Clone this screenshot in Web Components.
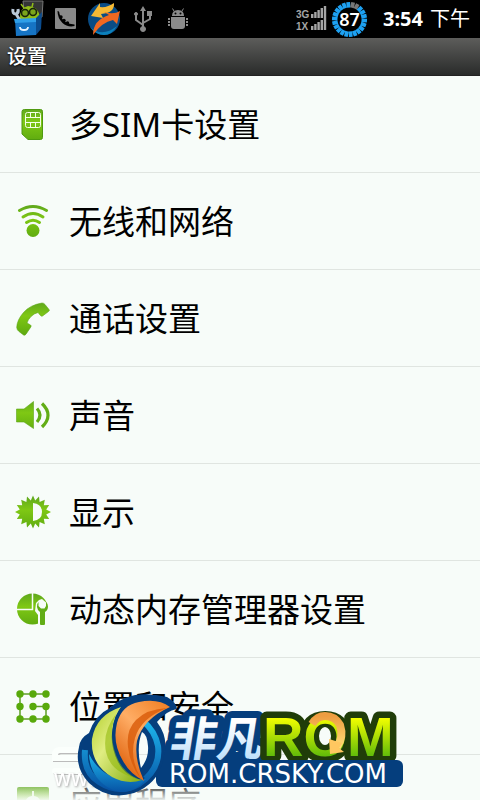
<!DOCTYPE html>
<html lang="zh-CN">
<head>
<meta charset="utf-8">
<meta name="viewport" content="width=device-width, initial-scale=1">
<title>设置</title>
<style>
  body {
    margin: 0;
    background: #f7fcf9;
    font-family: "Noto Sans", "Noto Sans CJK SC", sans-serif;
  }
</style>
</head>
<body>
<settings-screen>
  <status-bar slot="top" time="3:54" period="下午" battery="87"></status-bar>
  <title-bar slot="top">设置</title-bar>
  <setting-row icon="sim">多SIM卡设置</setting-row>
  <setting-row icon="wifi">无线和网络</setting-row>
  <setting-row icon="phone">通话设置</setting-row>
  <setting-row icon="sound">声音</setting-row>
  <setting-row icon="display">显示</setting-row>
  <setting-row icon="memory">动态内存管理器设置</setting-row>
  <setting-row icon="lock">位置和安全</setting-row>
  <setting-row icon="apps">应用程序</setting-row>
  <rom-logo slot="over"></rom-logo>
</settings-screen>

<script>
// all row icons are drawn on a 36x36 box
const icons = {
  sim: `<path fill="url(#g)" stroke="#4f9a10" d="M9.500 2.500h16q2 0 2 2v26q0 2-2 2H13l-6-5.500v-22.500q0-2 2.500-2z"/>
    <g fill="none" stroke="#f4ffe6"><rect x="10.500" y="5.500" width="15" height="15" rx="2"/><path d="M10.500 10.500h15M10.500 15.500h15M15.500 5.500v5M20.500 5.500v5M15.500 15.500v5M20.500 15.500v5"/></g>`,
  wifi: `<g fill="none" stroke="url(#g)" stroke-width="3" stroke-linecap="round"><path d="M4.500 6.500Q18 -1.500 31.500 6.500"/><path d="M8 13Q18 6 28 13"/><path d="M11.500 18.500Q18 14 24.500 18.500"/></g>
    <circle cx="18" cy="26.500" r="6.500" fill="url(#g)"/>`,
  phone: `<path fill="url(#g)" stroke="#5da618" stroke-width=".6" d="M27 2q2 0 3 1.500l4 5q1 1-.5 2l-6 4.500q-1 .5-2-.5l-2.500-3q-4 1-7 4t-4 6.500l3.500 2q1 .7.500 1.700l-5 7.500q-1 1.500-2.500.7L4 30.500q-2-1.500-2.300-4Q2 19 8.500 11.500T27 2z"/>`,
  sound: `<path fill="url(#g)" stroke="#5da618" stroke-width=".6" d="M1.500 11H9l9.500-7.500v27L9 24H1.500z"/>
    <g fill="none" stroke="#62ad16" stroke-width="3.200"><path d="M22 10.500q6 6.500 0 13.500"/><path d="M27 5.500q12 11.500 0 23.500"/></g>`,
  display: `<path fill="url(#g)" d="M18 .5l2.200 5 3.800-4 .6 5.400 5.200-2.200-1 5.500 5.400-.2-3 4.500 4.800 2.500-4.800 2.500 3 4.500-5.400-.2 1 5.500-5.200-2.200-.6 5.400-3.800-4-2.200 5-2.200-5-3.800 4-.6-5.400-5.200 2.200 1-5.500-5.400.2 3-4.500L0 17l4.800-2.500-3-4.500 5.400.2-1-5.500 5.200 2.200.6-5.400 3.800 4z"/>
    <path fill="#f7fcf9" d="M18 8q9 1 9 9T18 26z"/>`,
  memory: `<circle cx="17.500" cy="17" r="15.500" fill="url(#g)"/><path fill="none" stroke="#f7fcf9" stroke-width="1.500" d="M17.500 1v16.500H1"/>
    <path fill="#f7fcf9" d="M24 8l3-1 8 7v5l-3 4v12h-9V23l-3-4 1-8z"/>
    <path fill="#62ad16" d="M23.500 10q-2 2-1.500 5 .5 3.500 3 5v12q0 1 1 1h3q1 0 1-1V20q3-2 3-5.500 0-3-2-4.500v4l-1.500 2.500H26L23.500 14z"/>`,
  lock: `<path fill="none" stroke="#5f9d27" stroke-width="1.500" d="M18 17.500h13V30H5V5h26"/>
    <g fill="#58a90b"><circle cx="5" cy="5" r="3.700"/><circle cx="18" cy="5" r="3.700"/><circle cx="31" cy="5" r="3.700"/><circle cx="5" cy="17.500" r="3.700"/><circle cx="18" cy="17.500" r="3.700"/><circle cx="31" cy="17.500" r="3.700"/><circle cx="5" cy="30" r="3.700"/><circle cx="18" cy="30" r="3.700"/><circle cx="31" cy="30" r="3.700"/></g>`,
  apps: `<rect x="2" y="1" width="32" height="34" rx="2" fill="url(#g)"/><path fill="#e7f7d8" d="M17 5h2v5q6 1 7 7H10q1-6 7-7z"/>`
};

class SettingRow extends HTMLElement {
  connectedCallback() {
    this.attachShadow({ mode: "open" }).innerHTML = `
<style>
  :host {
    display: block;
    border-bottom: 1px solid #e0e5e1;
  }
  a {
    display: flex;
    align-items: center;
    gap: 18px;
    height: 94px;
    padding: 2px 15px 0;
    color: #000;
    font-size: 33px;
    line-height: 48px;
    text-decoration: none;
    white-space: nowrap;
  }
  svg {
    flex: none;
    width: 36px;
    height: 36px;
  }
</style>
<a href="#${this.getAttribute("icon")}">
  <svg viewBox="0 0 36 36" aria-hidden="true">
    <defs><linearGradient id="g" gradientUnits="userSpaceOnUse" x1="0" y1="2" x2="0" y2="34"><stop offset="0" stop-color="#60a91c"/><stop offset=".4" stop-color="#7fc814"/><stop offset="1" stop-color="#5eaa10"/></linearGradient></defs>
    ${icons[this.getAttribute("icon")]}
  </svg>
  <span><slot></slot></span>
</a>`;
  }
}

class TitleBar extends HTMLElement {
  connectedCallback() {
    this.attachShadow({ mode: "open" }).innerHTML = `
<style>
  :host {
    display: block;
    background: linear-gradient(#5d5d5b, #292b2a);
    border-bottom: 1px solid #222;
  }
  h1 {
    margin: 0;
    padding: 0 7px;
    color: #fff;
    font-size: 20px;
    font-weight: 500;
    line-height: 37px;
    text-shadow: 0 1px 2px #000;
  }
</style>
<h1><slot></slot></h1>`;
  }
}

class StatusBar extends HTMLElement {
  connectedCallback() {
    // battery ring: 22 ticks, the used ones are grey
    let ticks = "";
    for (let i = 0; i < 22; i++) {
      const color = i === 1 || i === 2 ? "#777" : "#1da1f2";
      ticks += `<rect x="16.500" y="1" width="3.800" height="5.500" fill="${color}" transform="rotate(${i * 360 / 22 - 4} 18.500 18.500)"/>`;
    }
    const bars = y => [0, 1, 2, 3, 4].map(i =>
      `<rect x="${15 + i * 3.2}" y="${y - 4 - i * 2}" width="2.400" height="${4 + i * 2}"/>`).join("");

    this.attachShadow({ mode: "open" }).innerHTML = `
<style>
  :host {
    display: flex;
    align-items: center;
    justify-content: space-between;
    height: 38px;
    padding: 0 10px;
    background: #000;
    color: #fff;
  }
  div {
    display: flex;
    align-items: center;
  }
  svg {
    display: block;
    flex: none;
  }
  .notes {
    gap: 10px;
  }
  .battery {
    display: grid;
    place-items: center;
    margin: 0 15px 0 4px;
    font-size: 18px;
    font-weight: 600;
    line-height: 24px;
  }
  .battery > * {
    grid-area: 1 / 1;
  }
  .clock {
    gap: 7px;
    font-size: 20px;
    line-height: 24px;
    white-space: nowrap;
  }
  text {
    font: bold 10px "Liberation Sans", sans-serif;
  }
</style>
<div class="notes">
  <svg width="34" height="38" viewBox="0 0 34 38">
    <path fill="#343536" stroke="#777" d="M13 1h20l-1 16-17 3z"/>
    <path fill="#90bd19" d="M10 19q-1-11 8-13 9 0 12 10l-3 5H11z"/>
    <path stroke="#90bd19" stroke-width="1.500" d="M14 8l-3-4M22 7l1-4"/>
    <g fill="#7ba51b" stroke="#17240a" stroke-width="1.600"><circle cx="15" cy="13" r="3.500"/><circle cx="23" cy="12" r="3.500"/></g>
    <path fill="none" stroke="#b9c8d7" stroke-width="3" d="M3 9q-1 5 3 5 3-1 2-5M6 14l5 8"/>
    <path fill="#1674c4" d="M5 20l21-1v16L6 36z"/><path fill="#2f9fe8" d="M4 19l22-1v4L5 23z"/><path fill="#0b4c8e" d="M26 18l6-6-1 17-5 6z"/>
    <path fill="none" stroke="#e4f3ff" stroke-width="1.800" d="M10 27q0 3 4 3 4 0 4-3"/>
  </svg>
  <svg width="23" height="22" viewBox="0 0 23 22">
    <rect x="1" y="0" width="21" height="21" rx="1" fill="#898989"/>
    <path fill="#000" d="M3.500 3q2 0 2 3 2 5 6 8 4 2 9 2.500v1.500q-7 1.500-12-3-5-5-5-12z"/>
    <g fill="#000"><circle cx="7" cy="9" r="1.700"/><circle cx="10" cy="12.500" r="1.700"/><circle cx="13.500" cy="15" r="1.700"/></g>
  </svg>
  <svg width="34" height="36" viewBox="0 0 34 36">
    <circle cx="17" cy="18" r="16" fill="#094c85"/><path fill="#0b80bb" d="M3 26q12 11 27-1-5 9-13 9T3 26z"/>
    <path fill="#f5b934" d="M4 15L13 2v4q7 1 14-4 1 10-13 11l2 4z"/>
    <path fill="#ef6821" d="M33 10l-3 13-4-4q-11 2-20 15 0-15 16-20l-5-3q10 3 16-1z"/>
  </svg>
  <svg width="26" height="28" viewBox="2 0 26 28" fill="#8b8b8b" stroke="#8b8b8b">
    <path fill="none" stroke-width="2" d="M14 5v18M14 20L7 15v-5M14 18l7-4V9"/>
    <path stroke="none" d="M14 1l3 5h-6zM18 6h5v5h-5z"/><circle cx="7" cy="9" r="1.500"/><circle cx="14" cy="24" r="2.500"/>
  </svg>
  <svg width="22" height="24" viewBox="0 0 22 24" fill="#8b8b8b">
    <path d="M5 9q0-6 6-6t6 6zM4 10h14v9q0 3-3 3H7q-3 0-3-3zM1 11h2v2H1zM1 14h2v2H1zM1 17h2v2H1zM19 11h2v2h-2zM19 14h2v2h-2zM19 17h2v2h-2z"/>
    <path fill="none" stroke="#8b8b8b" d="M7 4L5.500 1.500M15 4l1.500-2.500"/><circle cx="8.500" cy="6.500" r="1" fill="#000"/><circle cx="13.500" cy="6.500" r="1" fill="#000"/>
  </svg>
</div>
<div>
  <svg width="31" height="26" viewBox="0 0 31 26" fill="#a5a5a5">
    <text x="0" y="12">3G</text><text x="0" y="24">1X</text>
    ${bars(12)}${bars(24)}
  </svg>
  <div class="battery"><svg width="37" height="37" viewBox="0 0 37 37">${ticks}</svg><span>${this.getAttribute("battery")}</span></div>
  <div class="clock"><b>${this.getAttribute("time")}</b><span>${this.getAttribute("period")}</span></div>
</div>`;
  }
}

class RomLogo extends HTMLElement {
  connectedCallback() {
    this.attachShadow({ mode: "open" }).innerHTML = `
<style>
  :host {
    display: block;
    pointer-events: none;
  }
  svg {
    display: block;
    width: 360px;
    height: 110px;
  }
  text {
    paint-order: stroke;
    stroke-linejoin: round;
  }
  .www {
    font: 600 18px "Open Sans", sans-serif;
    fill: #fff;
    filter: drop-shadow(1px 1px 1px #aaa);
  }
  .cn {
    font: 700 47px "Noto Sans CJK SC", sans-serif;
    fill: url(#ice);
    stroke: #053e7d;
    stroke-width: 14px;
  }
  .rom {
    font: bold 56px "Liberation Sans", sans-serif;
    fill: url(#lime);
    stroke: #203d09;
    stroke-width: 13px;
  }
  .url {
    font: 26px "DejaVu Sans", sans-serif;
    fill: #fff;
  }
</style>
<svg viewBox="0 0 360 110" role="img" aria-label="非凡ROM">
  <defs>
    <linearGradient id="ice" x1="0" y1="0" x2="0" y2="1"><stop offset=".3" stop-color="#fff"/><stop offset="1" stop-color="#acd8fa"/></linearGradient>
    <linearGradient id="lime" x1="0" y1="0" x2="0" y2="1"><stop offset=".2" stop-color="#f4ff00"/><stop offset=".8" stop-color="#64bd09"/></linearGradient>
    <linearGradient id="leaf" x1="0" y1="0" x2="1" y2="1"><stop offset="0" stop-color="#b2cf28"/><stop offset=".4" stop-color="#e0ed82"/><stop offset="1" stop-color="#83ad0c"/></linearGradient>
    <linearGradient id="flame" x1="1" y1="0" x2=".3" y2="1"><stop offset="0" stop-color="#f07d20"/><stop offset=".5" stop-color="#ffad65"/><stop offset="1" stop-color="#df610c"/></linearGradient>
    <linearGradient id="sea" x1="0" y1="0" x2="0" y2="1"><stop offset="0" stop-color="#1eb7ed"/><stop offset="1" stop-color="#0754a5"/></linearGradient>
    <linearGradient id="gold" x1="0" y1="0" x2="0" y2="1"><stop offset="0" stop-color="#ee9d41"/><stop offset="1" stop-color="#ffdb75"/></linearGradient>
  </defs>
  <g fill="none" stroke="#bbb" stroke-width="6" stroke-linecap="round"><path d="M32 60H10q-5 0-5 5v3h27M5 81h27" transform="translate(1 1)"/><path stroke="#fbfffc" d="M32 60H10q-5 0-5 5v3h27M5 81h27"/></g>
  <text class="www" x="4" y="96">WWW.</text>

  <path fill="#053e7d" d="M108 62h102v18H108z"/>
  <text class="cn" transform="translate(118 66) skewX(-9)">非凡</text>
  <text class="rom" x="213" y="66">ROM</text>
  <ellipse cx="275" cy="46" rx="7" ry="10" fill="#f7fcf9" stroke="#203d09" stroke-width="2"/>
  <path fill="none" stroke="url(#gold)" stroke-width="8" d="M262 34q5-8 13-8 10 0 15 9 4 12-3 22"/>
  <path fill="#ffc760" d="M279 49l1 15 14-2-5-4 3-5z"/>
  <rect x="106" y="70" width="247" height="27" rx="6" fill="#053e7d"/>
  <text class="url" x="119" y="93">ROM.CRSKY.COM</text>

  <path fill="#053e7d" fill-rule="evenodd" d="M60 18Q80-2 117 7q9 5 10 12-11 2-20 13 12 16 7 34-4 27-30 37-26 8-45-10Q24 77 29 57q1-9 10-14 6-18 21-25zM92 42q-6 15-1 36 8-10 7-22t-6-14z"/>
  <path fill="none" stroke="url(#sea)" stroke-width="6" d="M35 60q-2 22 14 32 20 13 40 2 22-15 19-38-3-15-15-25"/>
  <path fill="url(#sea)" d="M39 64q16 32 57 25-16 20-37 9-19-11-20-34z"/>
  <path fill="url(#leaf)" d="M71 17Q46 25 42 49q-2 25 20 38 15 8 30 3-16-3-24-18-14-28 3-55z"/>
  <path fill="#93b90f" d="M66 24q-14 18-10 38t32 27Q72 82 66 65q-8-22 0-41z" opacity=".6"/>
  <path fill="none" stroke="#053e7d" stroke-width="3" d="M75 15q-14 14-10 37 5 26 29 37"/>
  <path fill="url(#flame)" d="M120 17q-12-9-31-5-17 3-22 21-5 20 6 38 7 13 21 20-10-22-7-40 6-22 33-34z"/>
  <path fill="#d85a09" d="M117 18q-20 1-31 12-10 10-8 27 2 18 13 32-12-21-6-41 6-20 32-30z" opacity=".8"/>
</svg>`;
  }
}

class SettingsScreen extends HTMLElement {
  connectedCallback() {
    this.attachShadow({ mode: "open" }).innerHTML = `
<style>
  :host {
    display: flex;
    flex-direction: column;
    position: relative;
    height: 100vh;
    overflow: hidden;
  }
  main {
    flex: 1;
    min-height: 0;
    overflow: hidden;
  }
  .fade {
    position: absolute;
    left: 0;
    right: 0;
    bottom: 0;
    height: 14px;
    background: linear-gradient(#f7fcf944, #f7fcf9ee);
    pointer-events: none;
  }
  .over {
    position: absolute;
    left: 50px;
    bottom: 0;
  }
</style>
<slot name="top"></slot>
<main><slot></slot></main>
<div class="fade"></div>
<div class="over"><slot name="over"></slot></div>`;
  }
}

customElements.define("setting-row", SettingRow);
customElements.define("title-bar", TitleBar);
customElements.define("status-bar", StatusBar);
customElements.define("rom-logo", RomLogo);
customElements.define("settings-screen", SettingsScreen);
</script>
</body>
</html>
